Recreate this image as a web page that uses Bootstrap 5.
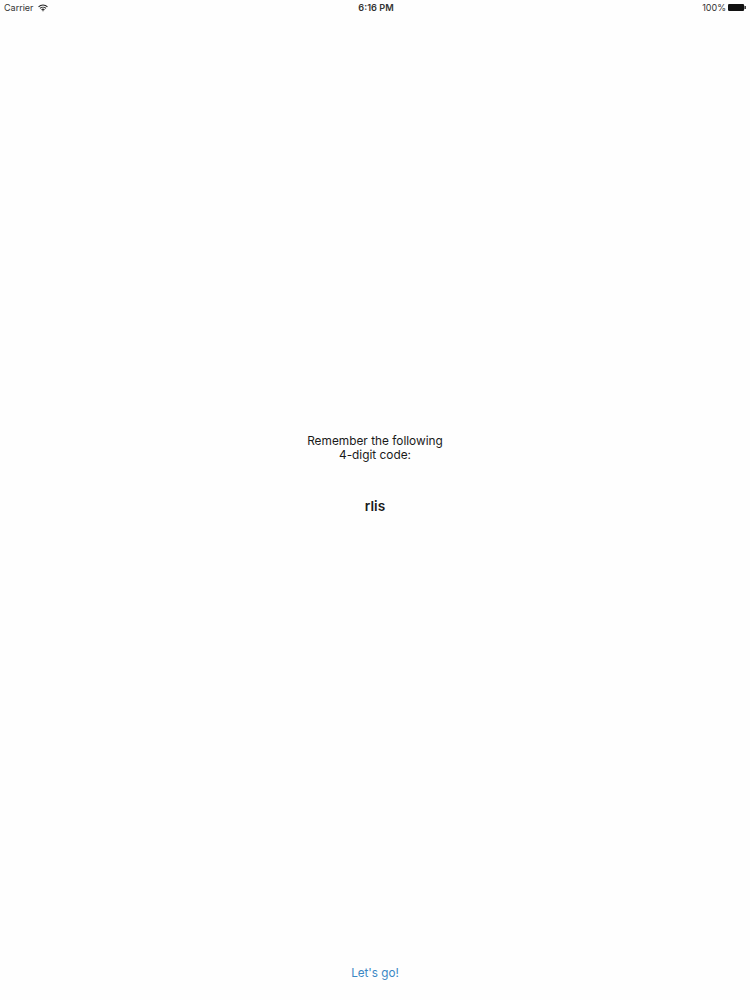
<!DOCTYPE html>
<html lang="en">
<head>
<meta charset="utf-8">
<title>Code</title>
<link href="https://cdn.jsdelivr.net/npm/bootstrap@5.3.0/dist/css/bootstrap.min.css" rel="stylesheet">
<style>
html, body { height: 1000px; overflow: hidden; }
body { background: #fefefe; color: #1a1a1a; font-family: Inter, "Liberation Sans", Arial, sans-serif; }
.phone-screen { height: 1000px; }
.status-strip { height: 15px; padding: 0 4px; font-size: 9px; line-height: 15px; color: #333; }
.status-side { flex: 1 1 0; }
.status-gap { gap: 2px; }
.status-time { font-weight: 600; font-size: 9.2px; margin-left: 2px; }
.prompt-area { flex: 1 1 auto; padding-top: 419px; }
.prompt-text { font-size: 11.85px; line-height: 14px; margin: 0; }
.code-text { font-size: 13.7px; line-height: 18px; font-weight: 600; margin-top: 35px; }
.go-link { font-size: 11.7px; line-height: 16px; color: #3a87c4; text-decoration: none; margin-bottom: 19px; }
</style>
</head>
<body>
<div class="phone-screen d-flex flex-column">
  <div class="status-strip d-flex align-items-center">
    <div class="status-side d-flex align-items-center gap-1">
      <span>Carrier</span>
      <svg width="10" height="8" viewBox="0 0 11 8" fill="none" stroke="#222" stroke-width="1.2"><path d="M.6 2.7C3.3.1 7.7.1 10.4 2.7"/><path d="M2.2 4.4c1.8-1.7 4.8-1.7 6.6 0"/><path d="M3.9 6c.9-.8 2.3-.8 3.2 0"/><path d="M5.5 7.9 4.6 6.9c.5-.4 1.3-.4 1.8 0z" fill="#222" stroke="none"/></svg>
    </div>
    <div class="status-time">6:16 PM</div>
    <div class="status-side status-gap d-flex align-items-center justify-content-end">
      <span>100%</span>
      <svg width="18" height="7" viewBox="0 0 19 7" fill="#111" preserveAspectRatio="none"><rect width="17" height="7" rx="1.2"/><rect x="17.4" y="2" width="1.4" height="3"/></svg>
    </div>
  </div>
  <div class="prompt-area text-center">
    <p class="prompt-text">Remember the following<br>4-digit code:</p>
    <div class="code-text">rlis</div>
  </div>
  <div class="text-center d-flex flex-column align-items-center">
    <a href="#" class="go-link">Let's go!</a>
  </div>
</div>
<script src="https://cdn.jsdelivr.net/npm/bootstrap@5.3.0/dist/js/bootstrap.bundle.min.js"></script>
</body>
</html>
